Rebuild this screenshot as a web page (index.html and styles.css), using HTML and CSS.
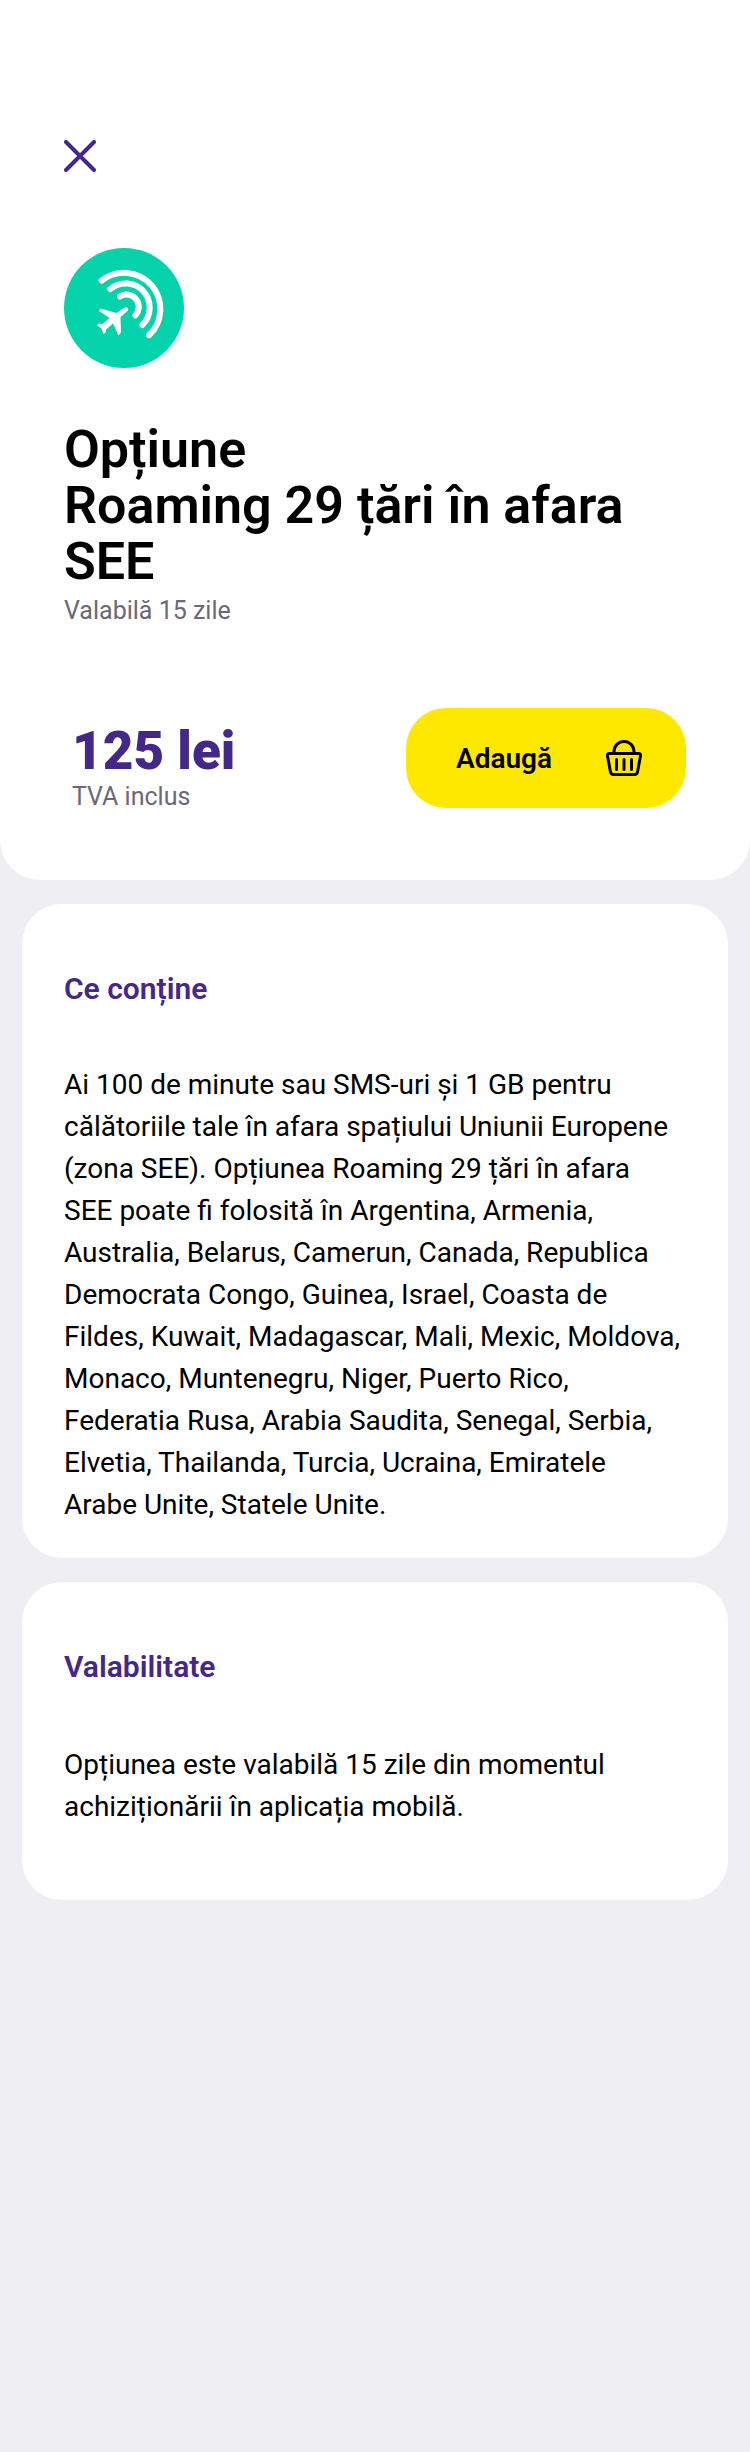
FILE: index.html
```html
<!DOCTYPE html>
<html lang="ro">
<head>
    <meta charset="UTF-8">
    <meta name="viewport" content="width=device-width, initial-scale=1.0">
    <title>Opțiune Roaming</title>
    <link rel="stylesheet" href="styles.css">
</head>
<body>

<header class="hero">
    <button class="close" type="button" aria-label="Închide">
        <svg width="32" height="32" viewBox="0 0 32 32" fill="none" stroke="currentColor" stroke-width="4" stroke-linecap="round">
            <path d="M2 2L30 30M30 2L2 30"/>
        </svg>
    </button>

    <svg class="badge" width="120" height="120" viewBox="0 0 120 120" aria-hidden="true">
        <circle cx="60" cy="60" r="60" fill="#04d2aa"/>
        <g fill="none" stroke="#fff" stroke-width="6" stroke-linecap="round">
            <path d="M37.700 32.700A36.150 36.150 0 0 1 85 87.300"/>
            <path d="M46.300 41A24.100 24.100 0 0 1 78.300 77"/>
            <path d="M56 48.500A12.200 12.200 0 0 1 71.300 67.300"/>
        </g>
        <path fill="#fff" d="M60.500 59.500C62.500 58 65 60.500 64 62.500L56.500 69L57 84.500L54.500 87.500L49 75.500L42 81.500L41.500 85L39.500 86L37.500 80.500L33 77.500L34.500 75.500L38.500 76L45.500 70L35 63L36.500 60.500L52.500 65Z"/>
    </svg>

    <h1>Opțiune<br>Roaming 29 țări în afara SEE</h1>
    <p class="note">Valabilă 15 zile</p>

    <div class="buy">
        <div class="price">
            <strong>125 lei</strong>
            <p class="note">TVA inclus</p>
        </div>
        <button class="add" type="button">
            <span>Adaugă</span>
            <svg width="36" height="36" viewBox="0 0 36 36" fill="none" stroke="currentColor" stroke-width="3" stroke-linecap="round" stroke-linejoin="round">
                <path d="M8 13V11.500A10 10 0 0 1 28 11.500V13"/>
                <path d="M3.500 13.500H32.500Q35 13.500 34.500 16L31.500 32Q31 34.500 28.500 34.500H7.500Q5 34.500 4.500 32L1.500 16Q1 13.500 3.500 13.500Z"/>
                <path d="M10.500 19.500V29.500M18 19.500V29.500M25.500 19.500V29.500"/>
            </svg>
        </button>
    </div>
</header>

<main>
    <section class="card">
        <h2>Ce conține</h2>
        <p>
            Ai 100 de minute sau SMS-uri și 1 GB pentru<br>
            călătoriile tale în afara spațiului Uniunii Europene<br>
            (zona SEE). Opțiunea Roaming 29 țări în afara<br>
            SEE poate fi folosită în Argentina, Armenia,<br>
            Australia, Belarus, Camerun, Canada, Republica<br>
            Democrata Congo, Guinea, Israel, Coasta de<br>
            Fildes, Kuwait, Madagascar, Mali, Mexic, Moldova,<br>
            Monaco, Muntenegru, Niger, Puerto Rico,<br>
            Federatia Rusa, Arabia Saudita, Senegal, Serbia,<br>
            Elvetia, Thailanda, Turcia, Ucraina, Emiratele<br>
            Arabe Unite, Statele Unite.
        </p>
    </section>

    <section class="card card-last">
        <h2>Valabilitate</h2>
        <p>
            Opțiunea este valabilă 15 zile din momentul<br>
            achiziționării în aplicația mobilă.
        </p>
    </section>
</main>

</body>
</html>
```

FILE: styles.css
```css
* {
    box-sizing: border-box;
}
body {
    margin: 0;
    background-color: #efeef3;
    color: #000;
    font-family: Roboto, "Open Sans", sans-serif;
}
h1, h2, p {
    margin: 0;
}
button {
    border: none;
    font-family: inherit;
    cursor: pointer;
}
svg {
    display: block;
}
.hero {
    padding: 140px 64px 66px;
    border-radius: 0 0 40px 40px;
    background-color: #fff;
}
.close {
    display: block;
    padding: 0;
    background: none;
    color: #432889;
}
.badge {
    margin: 76px 0 54px;
}
h1 {
    font-size: 52px;
    font-weight: 600;
    line-height: 56px;
}
.note {
    color: #6b6878;
    font-size: 25px;
    line-height: 42px;
}
.buy {
    display: flex;
    justify-content: space-between;
    align-items: flex-start;
    margin-top: 76px;
}
.price {
    padding: 14px 0 0 8px;
}
.price strong {
    display: block;
    color: #432889;
    font-size: 53px;
    font-weight: 900;
    line-height: 58px;
}
.price .note {
    line-height: 34px;
}
.add {
    display: flex;
    justify-content: space-between;
    align-items: center;
    width: 280px;
    height: 100px;
    padding: 0 44px 0 50px;
    border-radius: 40px;
    background-color: #ffe800;
    color: #000;
    font-size: 28px;
    font-weight: 600;
}
main {
    display: flex;
    flex-direction: column;
    gap: 24px;
    padding: 24px 22px;
}
.card {
    padding: 64px 42px 32px;
    border-radius: 40px;
    background-color: #fff;
}
h2 {
    margin-bottom: 54px;
    color: #432889;
    font-size: 30px;
    font-weight: 600;
    line-height: 42px;
}
.card p {
    font-size: 28px;
    line-height: 42px;
}
.card-last {
    padding-bottom: 72px;
}
.card-last h2 {
    margin-bottom: 56px;
}
```
